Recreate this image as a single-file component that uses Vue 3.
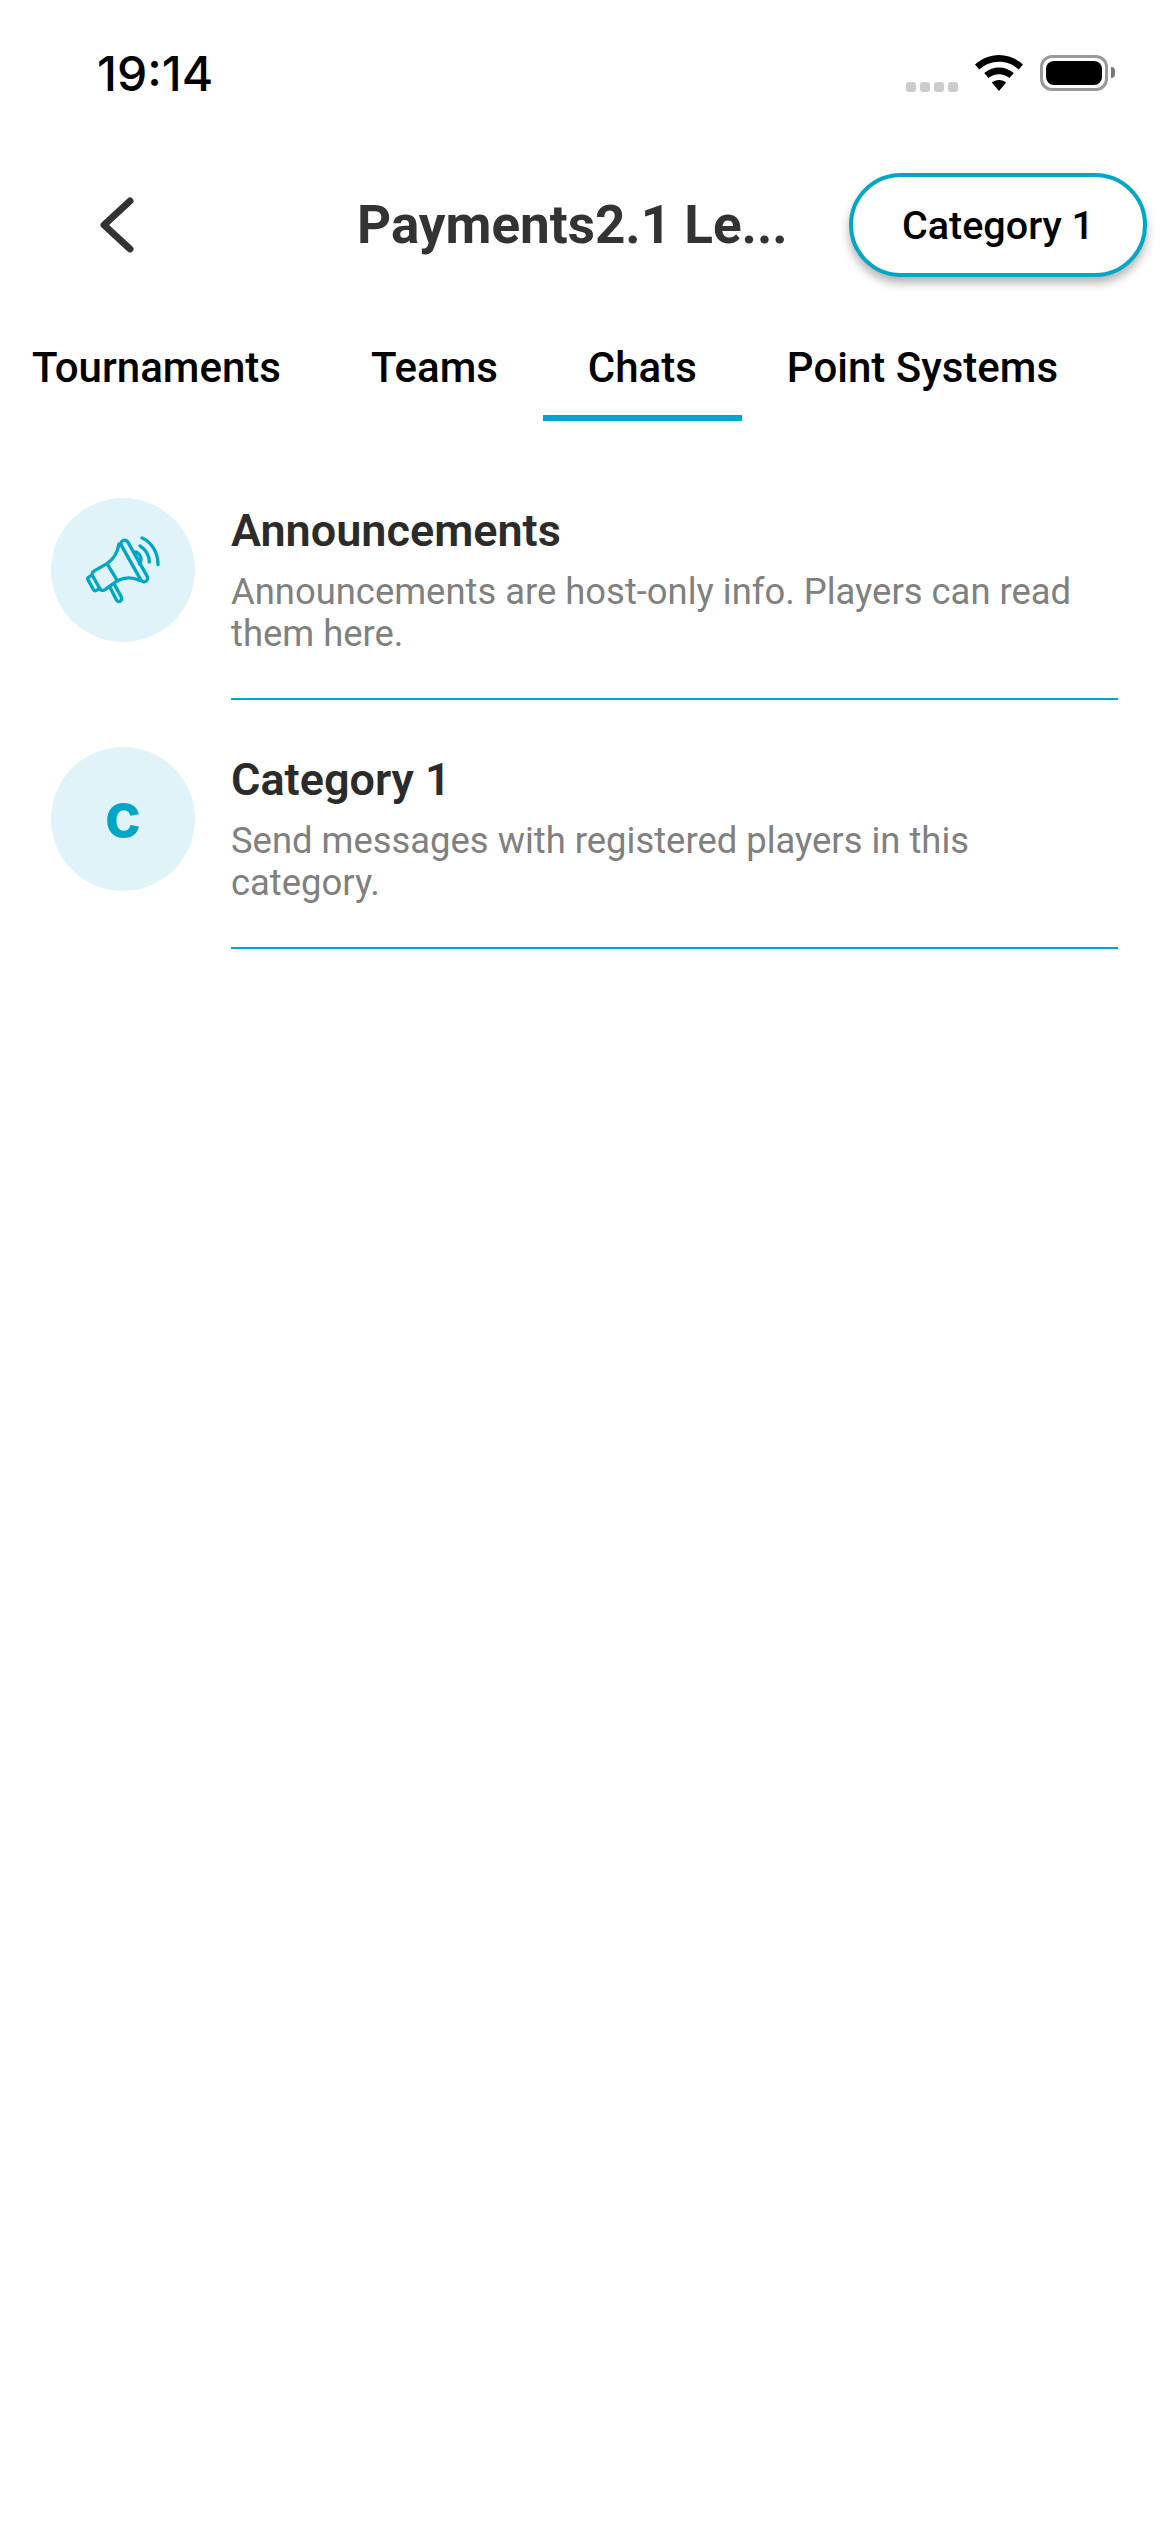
<script setup>
const tabs = [
  { label: 'Tournaments' },
  { label: 'Teams' },
  { label: 'Chats', active: true },
  { label: 'Point Systems' }
]
</script>

<template>
  <div class="screen">
    <div class="status-bar">
      <span class="time">19:14</span>
      <div class="status-icons">
        <div class="signal"><i></i><i></i><i></i><i></i></div>
        <svg class="wifi" viewBox="0 0 48 36" width="48" height="36">
          <path d="M24 0C15 0 7 3.500 0 9.500l4.300 5C10 9.600 16.500 6.800 24 6.800s14 2.800 19.700 7.700l4.300-5C41 3.500 33 0 24 0z" />
          <path d="M24 12.500c-5.600 0-10.600 2-14.800 5.500l4.300 5c3-2.400 6.600-3.800 10.500-3.800s7.500 1.400 10.500 3.800l4.300-5c-4.200-3.500-9.200-5.500-14.800-5.500z" />
          <path d="M24 25c-2.800 0-5.200 1-7.200 2.600L24 36l7.200-8.400C29.200 26 26.800 25 24 25z" />
        </svg>
        <div class="battery"><div class="battery-level"></div></div>
        <div class="battery-cap"></div>
      </div>
    </div>

    <div class="nav">
      <svg class="back" viewBox="0 0 34 56" width="34" height="56">
        <path d="M30 4L4 28l26 24" fill="none" stroke="#333" stroke-width="7" stroke-linecap="round" stroke-linejoin="round" />
      </svg>
      <div class="title">Payments2.1 Le...</div>
      <button class="pill">Category 1</button>
    </div>

    <div class="tabs">
      <div v-for="t in tabs" :key="t.label" class="tab" :class="{ active: t.active }">{{ t.label }}</div>
    </div>

    <div class="list">
      <div class="row">
        <div class="avatar">
          <svg viewBox="63 54 432 432" width="144" height="144" fill="none" stroke="#00a7c4" stroke-width="10" stroke-linecap="round" stroke-linejoin="round">
            <rect x="-70" y="-11" width="140" height="22" rx="11" transform="translate(313 243) rotate(60.600)" />
            <path d="M267 192C263 215 250 238 231 251" />
            <path d="M328 301C305 290 285 291 262 302" />
            <path d="M231 251L194 272C186 277 184 281 188 288L209 325C213 332 218 333 225 329L262 302Z" />
            <path d="M182 288L175 292C173 294 172 296 174 299L190 328C192 332 195 333 199 331L206 327" />
            <path d="M240 322L258 358C262 366 268 367 272 362C276 358 276 354 273 349L253 313" />
            <path d="M318 216C332 222 338 240 328 252" />
            <path d="M330 198C345 206 358 225 358 246" />
            <path d="M336 174C362 184 384 215 384 254" />
          </svg>
        </div>
        <div class="body">
          <div class="row-title">Announcements</div>
          <div class="row-desc">Announcements are host-only info. Players can read them here.</div>
        </div>
      </div>
      <div class="row">
        <div class="avatar letter">c</div>
        <div class="body">
          <div class="row-title">Category 1</div>
          <div class="row-desc">Send messages with registered players in this category.</div>
        </div>
      </div>
    </div>
  </div>
</template>

<style scoped>
.screen {
  width: 1170px;
  height: 2532px;
  background: #fff;
  font-family: Roboto, sans-serif;
  overflow: hidden;
}

.status-bar {
  display: flex;
  justify-content: space-between;
  align-items: flex-start;
  height: 173px;
  padding: 49px 55px 0 97px;
  box-sizing: border-box;
}

.time {
  font-family: Inter, sans-serif;
  font-size: 48px;
  font-weight: 500;
  line-height: 50px;
  color: #000;
}

.status-icons {
  display: flex;
  align-items: flex-start;
  padding-top: 6px;
}

.signal {
  display: flex;
  gap: 4px;
  margin-top: 27px;
  margin-right: 17px;
}

.signal i {
  width: 10px;
  height: 10px;
  border-radius: 3px;
  background: #ccc;
}

.wifi {
  fill: #000;
  margin-right: 17px;
}

.battery {
  width: 68px;
  height: 36px;
  box-sizing: border-box;
  border: 3px solid #999;
  border-radius: 12px;
  padding: 3px;
}

.battery-level {
  height: 100%;
  background: #000;
  border-radius: 8px;
}

.battery-cap {
  width: 4px;
  height: 11px;
  margin: 12px 0 0 3px;
  background: #777;
  border-radius: 0 5px 5px 0;
}

.nav {
  display: flex;
  align-items: center;
  height: 104px;
  padding-left: 100px;
}

.title {
  margin-left: 223px;
  width: 492px;
  font-size: 53px;
  font-weight: 700;
  color: #333;
  white-space: nowrap;
}

.pill {
  width: 298px;
  height: 104px;
  box-sizing: border-box;
  border: 4px solid #00a7c4;
  border-radius: 52px;
  background: #fff;
  box-shadow: 0 6px 10px rgba(0, 0, 0, 0.3);
  font-family: Roboto, sans-serif;
  font-size: 39.5px;
  font-weight: 500;
  color: #000;
  padding: 0;
}

.tabs {
  display: flex;
  margin: 54px 0 0 -13px;
}

.tab {
  padding: 0 45px;
  height: 90px;
  line-height: 74px;
  box-sizing: border-box;
  font-size: 42px;
  font-weight: 500;
  color: #000;
  white-space: nowrap;
}

.tab.active {
  border-bottom: 6px solid #00a7c4;
}

.list {
  display: flex;
  flex-direction: column;
  padding: 77px 52px 0 51px;
  gap: 47px;
}

.row {
  display: flex;
  gap: 36px;
}

.avatar {
  flex: none;
  width: 144px;
  height: 144px;
  box-sizing: border-box;
  border-radius: 50%;
  background: #dff3f8;
  display: flex;
  align-items: center;
  justify-content: center;
}

.letter {
  padding-bottom: 9px;
  font-family: Inter, sans-serif;
  font-size: 62px;
  font-weight: 700;
  color: #00a7c4;
}

.body {
  flex: 1;
  height: 202px;
  box-sizing: border-box;
  border-bottom: 2px solid #00a7c4;
}

.row-title {
  font-size: 45px;
  font-weight: 600;
  line-height: 52px;
  color: #2b2b2b;
  margin-top: 7px;
}

.row-desc {
  font-size: 36.400px;
  line-height: 42px;
  color: #808080;
  margin-top: 14px;
}
</style>
